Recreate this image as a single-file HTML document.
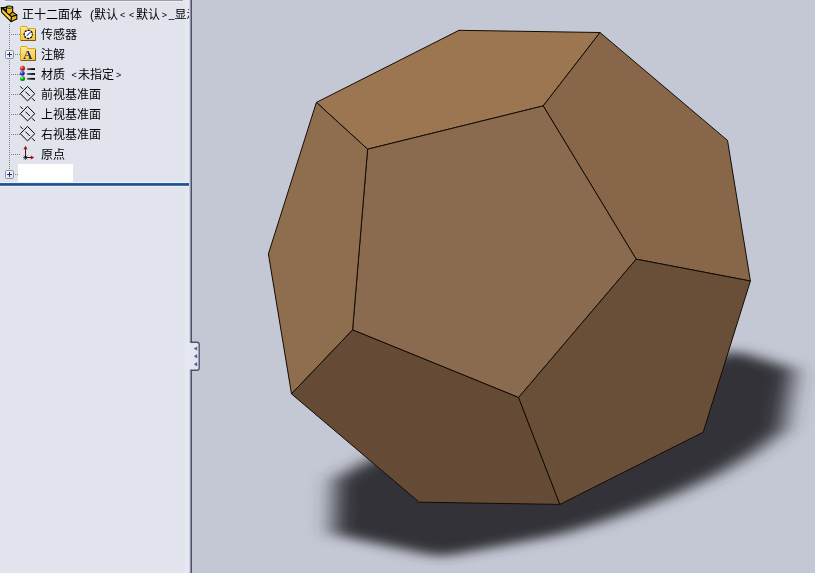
<!DOCTYPE html>
<html lang="zh-CN">
<head>
<meta charset="utf-8">
<title>正十二面体</title>
<style>
html,body{margin:0;padding:0;}
body{width:815px;height:573px;overflow:hidden;background:#c4c8d4;position:relative;font-family:"Liberation Sans","Noto Sans CJK SC",sans-serif;font-size:12px;color:#000;}
#view{position:absolute;left:0;top:0;width:815px;height:573px;}
#panel{position:absolute;left:0;top:0;width:189px;height:573px;background:#e1e4ed;overflow:hidden;}
#panel .edge{position:absolute;left:183px;top:0;width:6px;height:573px;background:linear-gradient(to right,#e1e4ee,#e8eaf2);}
#topbar{position:absolute;left:5px;top:0;width:178px;height:1px;background:#a0a0a2;box-shadow:0 1px 0 #eceef4;}
#tree{will-change:transform;position:absolute;left:0;top:0;width:189px;height:200px;overflow:hidden;}
.row{position:absolute;left:41px;height:20px;line-height:20px;white-space:nowrap;font-size:12px;}
.row span{display:inline-block;text-align:center;}
.row span.s{font-size:9px;position:relative;top:-1.5px;}
#icons{position:absolute;left:0;top:0;}
#whitebox{position:absolute;left:18px;top:164px;width:55px;height:18px;background:#fff;}
#sepl{position:absolute;left:0;top:182px;width:189px;height:1px;background:#eef1f7;}
#sep{position:absolute;left:0;top:183px;width:189px;height:3px;background:linear-gradient(to bottom,#2f5f9f 0,#2f5f9f 1px,#1d4e8f 1px,#1d4e8f 2px,#4a74ad 2px,#4a74ad 3px);}
#sep2{position:absolute;left:0;top:186px;width:189px;height:1px;background:#e9edf5;}
</style>
</head>
<body>
<svg id="view" width="815" height="573" viewBox="0 0 815 573">
  <defs>
    <filter id="blur" x="-20%" y="-30%" width="140%" height="160%"><feGaussianBlur stdDeviation="11.5 5.3"/></filter>
  </defs>
  <rect x="0" y="0" width="815" height="573" fill="#c4c8d4"/>
  <polygon filter="url(#blur)" fill="#313337" points="369,460 335,479 333,534 440,557 498,546.5 560,534.5 600,522.4 640,508.6 680,492.3 720,473 752,454 783.5,430 794,369 733,350 600,400 450,430"/>
  <g stroke="#140c04" stroke-width="1" stroke-linejoin="round">
    <polygon fill="#9b7650" points="459,30.3 600,32.5 543.2,105.9 367.6,149.2 316.4,102.4"/>
    <polygon fill="#876649" points="600,32.5 727.5,140.4 750.4,281 636.2,259.2 543.2,105.9"/>
    <polygon fill="#8b6b50" points="367.6,149.2 543.2,105.9 636.2,259.2 518.6,397.5 352.6,329.9"/>
    <polygon fill="#8e6e4e" points="316.4,102.4 367.6,149.2 352.6,329.9 291.5,393.9 268.4,253.9"/>
    <polygon fill="#654a36" points="352.6,329.9 518.6,397.5 559.9,504.4 419.2,502.2 291.5,393.9"/>
    <polygon fill="#6a4f38" points="636.2,259.2 750.4,281 703.2,432.2 559.9,504.4 518.6,397.5"/>
  </g>
</svg>

<div id="panel">
  <div class="edge"></div>
  <div id="topbar"></div>
  <div id="tree">
    <div class="row" style="left:22px;top:5px;">正十二面体<span style="width:8px"> </span><span style="width:4px">(</span>默认<span class="s" style="width:9px">&lt;</span><span class="s" style="width:9px">&lt;</span>默认<span class="s" style="width:8.5px">&gt;</span><span style="width:6px;font-size:10px;position:relative;top:-1px">_</span>显示</div>
    <div class="row" style="top:25px;">传感器</div>
    <div class="row" style="top:45px;">注解</div>
    <div class="row" style="top:65px;">材质<span style="width:5px"> </span><span class="s" style="width:8px">&lt;</span>未指定<span class="s" style="width:9px">&gt;</span></div>
    <div class="row" style="top:85px;">前视基准面</div>
    <div class="row" style="top:105px;">上视基准面</div>
    <div class="row" style="top:125px;">右视基准面</div>
    <div class="row" style="top:145px;">原点</div>
  </div>

  <svg id="icons" width="190" height="200" viewBox="0 0 190 200">
    <defs>
      <linearGradient id="fold" x1="0" y1="0" x2="0" y2="1"><stop offset="0" stop-color="#ffeb8e"/><stop offset="1" stop-color="#f6c63a"/></linearGradient>
      <linearGradient id="boxg" x1="0" y1="0" x2="1" y2="1"><stop offset="0" stop-color="#ffffff"/><stop offset="1" stop-color="#d9dde6"/></linearGradient>
      <radialGradient id="rb" cx="0.35" cy="0.3" r="0.8"><stop offset="0" stop-color="#ff9a9a"/><stop offset="0.5" stop-color="#e01818"/><stop offset="1" stop-color="#7a0000"/></radialGradient>
      <radialGradient id="bb" cx="0.35" cy="0.3" r="0.8"><stop offset="0" stop-color="#b0b0ff"/><stop offset="0.5" stop-color="#2828d8"/><stop offset="1" stop-color="#000070"/></radialGradient>
      <radialGradient id="gb" cx="0.35" cy="0.3" r="0.8"><stop offset="0" stop-color="#a0ffa0"/><stop offset="0.5" stop-color="#18b018"/><stop offset="1" stop-color="#005800"/></radialGradient>
      <linearGradient id="barg" x1="0" y1="0" x2="1" y2="0"><stop offset="0" stop-color="#6a6a6a"/><stop offset="0.6" stop-color="#111"/><stop offset="1" stop-color="#000"/></linearGradient>
      <g id="folder">
        <path d="M0.5,14.5 V1.5 Q0.5,0.5 1.5,0.5 H6 Q7,0.5 7.2,1.5 L7.5,2.5 H15 Q15.5,2.5 15.5,3.2 V14.5 Z" fill="url(#fold)" stroke="#d9a520" stroke-width="1"/>
        <path d="M1,14.5 H15.5 V3.5" fill="none" stroke="#7d5a08" stroke-width="1"/>
      </g>
      <g id="plane" fill="none" stroke="#000" stroke-width="1">
        <path d="M0.3,7.7 L7.5,0.4 L14.8,7.7 L7.5,14.9 Z"/>
        <path d="M0.2,0.4 L2.8,3 M5.5,5.7 L9.8,10 M12,12.2 L14.8,15"/>
      </g>
      <g id="plus">
        <rect x="0.5" y="0.5" width="8" height="8" rx="1.2" fill="url(#boxg)" stroke="#8d9298" stroke-width="1"/>
        <path d="M2,4.5 H7 M4.5,2 V7" stroke="#1c2a78" stroke-width="1" shape-rendering="crispEdges"/>
      </g>
    </defs>
    <!-- dotted connectors -->
    <g stroke="#7f7f7f" stroke-width="1" stroke-dasharray="1 1" shape-rendering="crispEdges" fill="none">
      <path d="M9.5,24 V50 M9.5,60 V170"/>
      <path d="M11,34.5 H20 M15,54.5 H20 M11,74.5 H20 M11,94.5 H20 M11,114.5 H20 M11,134.5 H20 M11,154.5 H20 M15,174.5 H18"/>
    </g>
    <use href="#plus" x="5" y="50"/>
    <use href="#plus" x="5" y="170"/>
    <!-- root part icon -->
    <g transform="translate(1,6)" stroke="#0a0600" stroke-width="1.05" stroke-linejoin="round">
      <path d="M0.2,1.7 L4.9,1.2 L15.8,8.9 L10.5,10.8 Z" fill="#c9a226"/>
      <path d="M0.2,1.7 L10.5,10.8 L10,15.7 L0.8,6.4 Z" fill="#f4d634"/>
      <path d="M10.5,10.8 L15.8,8.9 V13.1 L10,15.7 Z" fill="#e6b416"/>
      <path d="M5.4,1.2 V6.3 L8.4,8.9 L11.7,5.6 V1.2 Z" fill="#ecbc1a"/>
      <ellipse cx="8.5" cy="1.1" rx="3.2" ry="1.1" fill="#f8de58"/>
      <path d="M2.2,2.2 L4.8,4.6" fill="none" stroke-width="1.2"/>
    </g>
    <!-- sensors folder -->
    <use href="#folder" x="20" y="26"/>
    <circle cx="28.3" cy="34.4" r="4.1" fill="#fff" stroke="#555" stroke-width="0.8"/><circle cx="28.3" cy="34.4" r="4.1" fill="none" stroke="#000" stroke-width="1.3" stroke-dasharray="1.6 1.62" stroke-dashoffset="0.8"/>
    <path d="M26.8,35.9 L30.5,32.2" stroke="#2456ad" stroke-width="1.1"/>
    <!-- annotations folder -->
    <use href="#folder" x="20" y="46"/>
    <text x="27.8" y="58.6" text-anchor="middle" font-family="'Liberation Serif',serif" font-weight="bold" font-size="12.5" fill="#1b2a6e">A</text>
    <!-- material -->
    <circle cx="22.5" cy="68.3" r="2.5" fill="url(#rb)"/>
    <circle cx="22.3" cy="73.3" r="2.4" fill="url(#bb)"/>
    <circle cx="22.5" cy="78.5" r="2.5" fill="url(#gb)"/>
    <g fill="url(#barg)"><rect x="27" y="68.2" width="8" height="1.8"/><rect x="27" y="73.1" width="8" height="1.8"/><rect x="27" y="77.9" width="8" height="1.8"/></g>
    <!-- planes -->
    <use href="#plane" x="20" y="86"/>
    <use href="#plane" x="20" y="106"/>
    <use href="#plane" x="20" y="126"/>
    <!-- origin -->
    <g>
      <path d="M25.5,157.5 V148 M25.5,157.5 H32" stroke="#5a0c0c" stroke-width="1" fill="none"/>
      <path d="M25.5,145.8 L23.4,149.2 H27.6 Z M34.2,157.5 L30.8,155.4 V159.6 Z" fill="#a01212"/>
      <path d="M23.7,155.7 L27.3,159.3 M27.3,155.7 L23.7,159.3 M23,157.5 H28 M25.5,155 V160" stroke="#000" stroke-width="0.6"/>
    </g>
  </svg>
  <div id="whitebox"></div>
  <div id="sepl"></div><div id="sep"></div><div id="sep2"></div>
</div>

<svg id="split" width="20" height="573" viewBox="0 0 20 573" style="position:absolute;left:185px;top:0;">
  <rect x="4" y="0" width="1" height="573" fill="#cdd0de"/>
  <rect x="5" y="0" width="1" height="573" fill="#8f92a8"/>
  <rect x="6" y="0" width="1" height="573" fill="#4d5066"/>
  <path d="M4,342 H12.2 Q14.3,342 14.3,344 V368.5 Q14.3,370.5 12.2,370.5 H4 Z" fill="#e3e6ef"/>
  <path d="M5.2,342.3 H12 Q14.2,342.3 14.2,344.5 V368 Q14.2,370.2 12,370.2 H5.2" fill="none" stroke="#50536a" stroke-width="1.4"/>
  <path d="M8.8,348.6 L12.2,346.4 V350.8 Z M8.8,356.3 L12.2,354.1 V358.5 Z M8.8,364.2 L12.2,362 V366.4 Z" fill="#5c5ca0"/>
</svg>
</body>
</html>
